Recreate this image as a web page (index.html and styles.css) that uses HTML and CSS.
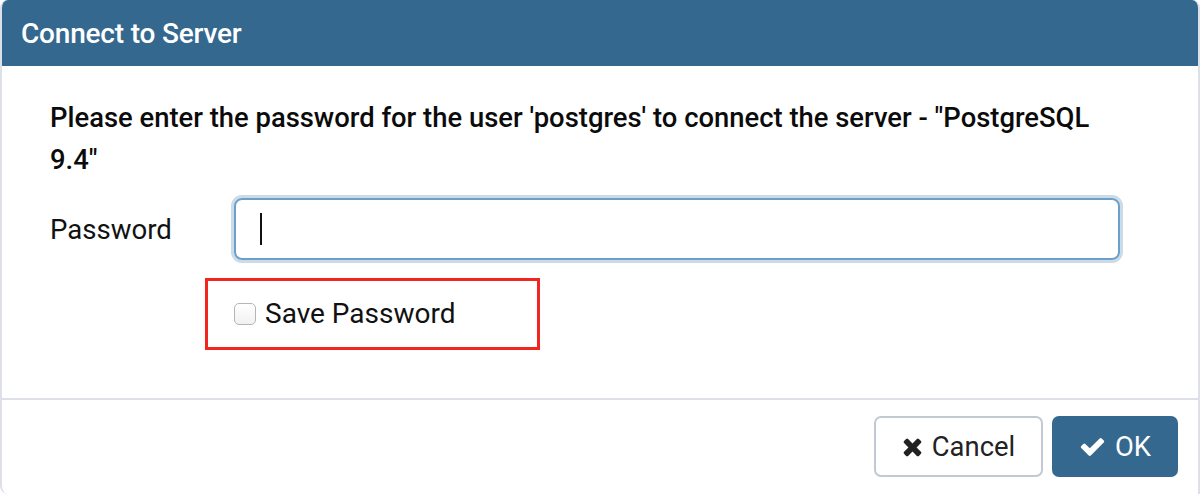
FILE: index.html
```html
<!DOCTYPE html>
<html>
<head>
<meta charset="utf-8">
<link rel="stylesheet" href="styles.css">
</head>
<body>
<div class="dialog">
  <div class="header">Connect to Server</div>
  <div class="body">
    <p class="message">Please enter the password for the user 'postgres' to connect the server - "PostgreSQL 9.4"</p>
    <div class="row">
      <label class="label">Password</label>
      <div class="field"><span class="caret"></span></div>
    </div>
    <div class="row check-row">
      <div class="highlight">
        <span class="checkbox"></span>
        <span class="check-label">Save Password</span>
      </div>
    </div>
  </div>
  <div class="footer">
    <button class="btn btn-cancel">
      <svg class="icon" viewBox="0 0 1408 1792" width="21" height="27"><path fill="#222" d="M1298 1322q0 40-28 68l-136 136q-28 28-68 28t-68-28l-294-294-294 294q-28 28-68 28t-68-28l-136-136q-28-28-28-68t28-68l294-294-294-294q-28-28-28-68t28-68l136-136q28-28 68-28t68 28l294 294 294-294q28-28 68-28t68 28l136 136q28 28 28 68t-28 68l-294 294 294 294q28 28 28 68z"/></svg>
      <span>Cancel</span>
    </button>
    <button class="btn btn-ok">
      <svg class="icon" viewBox="0 0 1792 1792" width="27" height="27"><path fill="#fff" d="M1671 566q0 40-28 68l-724 724-136 136q-28 28-68 28t-68-28l-136-136-362-362q-28-28-28-68t28-68l136-136q28-28 68-28t68 28l294 295 656-657q28-28 68-28t68 28l136 136q28 28 28 68z"/></svg>
      <span>OK</span>
    </button>
  </div>
</div>
</body>
</html>
```

FILE: styles.css
```css
html, body {
  margin: 0;
  padding: 0;
  background: #fff;
}
body {
  font-family: Roboto, "Liberation Sans", sans-serif;
  color: #111;
}
.dialog {
  width: 1200px;
  height: 494px;
  box-sizing: border-box;
  display: flex;
  flex-direction: column;
  border-left: 2px solid #dde0e8;
  border-right: 2px solid #dde0e8;
  border-radius: 8px 8px 0 8px;
  overflow: hidden;
  background: #fff;
}
.header {
  height: 66px;
  margin: 0 -2px;
  background: #34688f;
  color: #fff;
  font-size: 28px;
  font-weight: 500;
  display: flex;
  align-items: center;
  padding-left: 21px;
  box-sizing: border-box;
  flex: none;
  letter-spacing: -0.2px;
}
.body {
  padding: 0 0 0 48px;
  height: 334px;
  box-sizing: border-box;
  border-bottom: 2px solid #dde0e8;
  flex: none;
}
.message {
  margin: 0;
  padding-top: 31px;
  font-size: 27.4px;
  font-weight: 500;
  line-height: 42px;
  width: 1080px;
  color: #0b0b0b;
}
.row {
  display: flex;
  align-items: center;
}
.label {
  width: 184px;
  font-size: 27.6px;
  color: #111;
  margin-top: 17px;
}
.field {
  margin-top: 17px;
  width: 886px;
  height: 62px;
  box-sizing: border-box;
  border: 2px solid #6d9fc8;
  border-radius: 8px;
  box-shadow: 0 0 0 3px #ccdbe8;
  display: flex;
  align-items: center;
  padding-left: 24px;
}
.caret {
  width: 2px;
  height: 32px;
  background: #111;
}
.check-row {
  margin-top: 18px;
  padding-left: 155px;
}
.highlight {
  width: 335px;
  height: 72px;
  box-sizing: border-box;
  border: 3px solid #f0261f;
  display: flex;
  align-items: center;
  padding-left: 26px;
  padding-bottom: 2px;
}
.checkbox {
  width: 22px;
  height: 22px;
  box-sizing: border-box;
  border: 1px solid #b5b5b5;
  border-radius: 5px;
  background: linear-gradient(#fff, #f1f1f1);
  margin-right: 9px;
  margin-top: 2px;
}
.check-label {
  font-size: 28px;
  color: #111;
}
.footer {
  flex: none;
  display: flex;
  justify-content: flex-end;
  gap: 9px;
  padding: 16px 20px 0 0;
}
.btn {
  height: 61px;
  box-sizing: border-box;
  border-radius: 7px;
  font-family: Roboto, "Liberation Sans", sans-serif;
  font-size: 27.4px;
  display: flex;
  align-items: center;
  justify-content: center;
  gap: 9px;
  padding: 0;
  cursor: pointer;
}
.btn-cancel {
  width: 169px;
  background: #fff;
  border: 2px solid #c3c9d3;
  color: #222;
}
.btn-ok {
  width: 126px;
  background: #34688f;
  border: none;
  color: #fff;
}
.icon {
  display: block;
}
```
